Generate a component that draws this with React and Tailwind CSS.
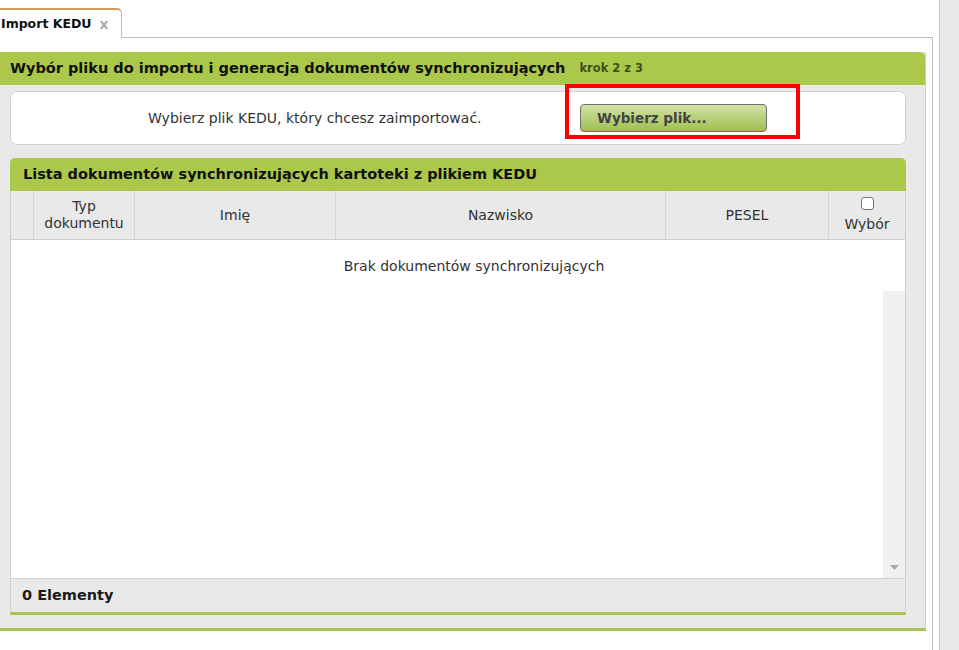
import React from "react";

const FONT = { fontFamily: '"DejaVu Sans", sans-serif' };

export default function App() {
  return (
    <div className="w-[959px] h-[650px] bg-white flex overflow-hidden text-[#333]" style={FONT}>
      <div className="w-[939px] flex flex-col">
        {/* tab bar */}
        <div className="h-[38px] flex items-end">
          <div className="w-[122px] h-[30px] border-t-2 border-r border-t-[#d49a5e] border-r-[#b9bdc8] rounded-tr-[5px] flex items-center pl-[1px] gap-[8px] bg-white">
            <span className="text-[12.5px] font-bold text-[#111] whitespace-nowrap">Import KEDU</span>
            <span className="text-[14px] font-bold text-[#adadad] leading-none">x</span>
          </div>
          <div className="flex-1 mr-[6px] border-b border-[#b9bdc8] h-full"></div>
        </div>
        {/* content pane */}
        <div className="flex-1 w-[933px] border-r border-[#b9bdc8] pt-[14px]">
          <div className="relative w-[926px] h-[579px] bg-[#e9e9e9] border-r border-[#cfcfcf] border-b-[3px] border-b-[#a8c64c] flex flex-col">
            <div className="h-[33px] bg-[#abc84a] rounded-tr-[5px] flex items-center pl-[10px] whitespace-nowrap">
              <span className="text-[14.5px] font-bold text-[#111]">Wybór pliku do importu i generacja dokumentów synchronizujących</span>
              <span className="text-[11.5px] font-bold text-[#3f4f1c] ml-[14px] mt-[1px]">krok 2 z 3</span>
            </div>
            <div className="mt-[6px] ml-[10px] w-[896px] h-[54px] bg-white border border-[#d2d2d2] rounded-[7px] flex items-center">
              <div className="w-[569px] pl-[137px] whitespace-nowrap text-[14px] text-[#333]">Wybierz plik KEDU, który chcesz zaimportować.</div>
              <button className="w-[187px] h-[28px] rounded-[4px] border border-[#707070] bg-gradient-to-b from-[#d3e3a5] to-[#9fbf4d] text-left pl-[16px] text-[13.5px] font-bold text-[#444] whitespace-nowrap" style={FONT}>
                Wybierz plik...
              </button>
            </div>
            <div className="mt-[13px] ml-[10px] w-[896px] h-[457px] flex flex-col border-l border-r border-[#cfcfcf] border-b-[3px] border-b-[#a8c64c] rounded-t-[5px]">
              <div className="h-[33px] -mx-[1px] bg-[#abc84a] rounded-t-[5px] flex items-center pl-[13px] whitespace-nowrap">
                <span className="text-[14.5px] font-bold text-[#111]">Lista dokumentów synchronizujących kartoteki z plikiem KEDU</span>
              </div>
              <div className="h-[49px] bg-[#e9e9e9] border-b border-[#cfcfcf] flex text-[14px] text-[#333]">
                <div className="w-[23px] border-r border-[#d4d4d4]"></div>
                <div className="w-[101px] border-r border-[#d4d4d4] flex items-center justify-center text-center leading-[17px]">Typ<br />dokumentu</div>
                <div className="w-[201px] border-r border-[#d4d4d4] flex items-center justify-center">Imię</div>
                <div className="w-[330px] border-r border-[#d4d4d4] flex items-center justify-center">Nazwisko</div>
                <div className="w-[163px] border-r border-[#d4d4d4] flex items-center justify-center">PESEL</div>
                <div className="flex-1 flex flex-col items-center justify-center leading-[17px]">
                  <span className="w-[13px] h-[13px] border border-[#767676] rounded-[3px] bg-white mb-[6px]"></span>
                  <span>Wybór</span>
                </div>
              </div>
              <div className="flex-1 bg-white flex">
                <div className="flex-1 flex flex-col">
                  <div className="h-[52px] flex items-center justify-center text-[14px] text-[#333] pl-[54px] whitespace-nowrap">Brak dokumentów synchronizujących</div>
                </div>
                <div className="w-[22px] flex flex-col">
                  <div className="h-[51px]"></div>
                  <div className="flex-1 bg-[#f0f0f0] flex flex-col justify-end items-center pb-[8px]">
                    <svg width="9" height="5" viewBox="0 0 9 5"><path d="M0 0 H9 L4.5 5 Z" fill="#a8a8a8" /></svg>
                  </div>
                </div>
              </div>
              <div className="h-[34px] bg-[#e9e9e9] border-t border-[#d2d2d2] flex items-center pl-[11px]">
                <span className="text-[14.5px] font-bold text-[#1a1a1a]">0 Elementy</span>
              </div>
            </div>
            {/* annotation overlay */}
            <div className="absolute left-[565px] top-[32px] w-[235px] h-[55px] border-[4px] border-[#f00]"></div>
          </div>
        </div>
      </div>
      <div className="w-[20px] h-full bg-[#e8e8e8] border-l border-[#c8c8c8]"></div>
    </div>
  );
}
